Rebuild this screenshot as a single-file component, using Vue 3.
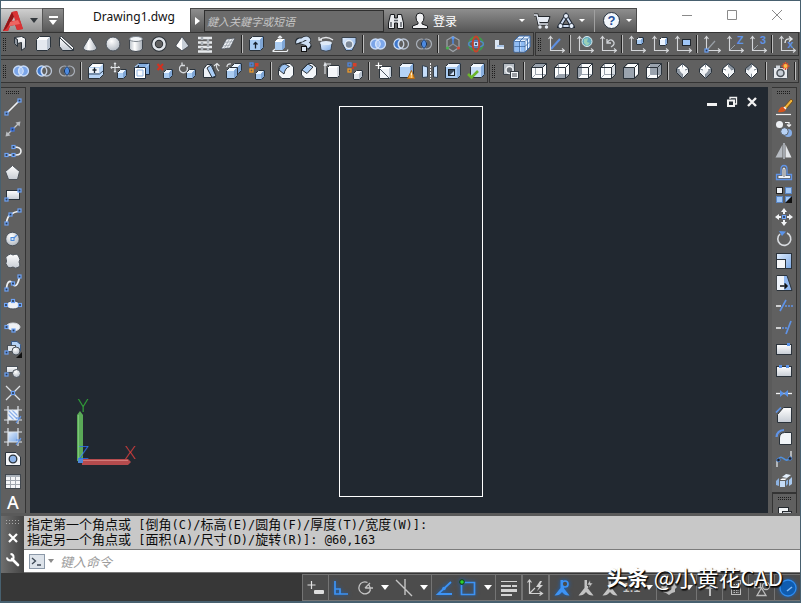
<script setup>
import { ref } from 'vue'

const DARK = '#2b333b'
const BLUE = '#5f93e6'
const PALE = '#aaccf2'

const poly = (points, fill, stroke = DARK) =>
  `<polygon transform="translate(-.5 -.5)" points="${points}" fill="${fill}" stroke="${stroke}" stroke-linejoin="round"/>`
const line = (d, stroke = '#e6e9ee', w = 1.4, extra = '') =>
  `<path d="${d}" fill="none" stroke="${stroke}" stroke-width="${w}" ${extra}/>`
const node = (x, y, stroke = '#6da2f5') =>
  `<rect x="${x - 1.5}" y="${y - 1.5}" width="3" height="3" fill="#2b3a52" stroke="${stroke}" stroke-width="1.2"/>`
const box = (x, y, s, front = '#e4e9ef', top = '#fdfdfe', side = '#b9c3cf', d = 3) =>
  poly(`${x},${y + d} ${x + s},${y + d} ${x + s},${y + s + d} ${x},${y + s + d}`, front, front) +
  poly(`${x},${y + d} ${x + d},${y} ${x + s + d},${y} ${x + s},${y + d}`, top, top) +
  poly(`${x + s},${y + d} ${x + s + d},${y} ${x + s + d},${y + s} ${x + s},${y + s + d}`, side, side) +
  poly(`${x},${y + d} ${x + d},${y} ${x + s + d},${y} ${x + s + d},${y + s} ${x + s},${y + s + d} ${x},${y + s + d}`, 'none')
const blueBox = (x, y, s, d = 3) => box(x, y, s, PALE, '#edf6ff', '#7fa6d6', d)
const circles = (a, b, lens) =>
  `<circle cx="6.5" cy="9" r="5" fill="${a}" stroke="#c9dcf8" stroke-width="1.3"/>` +
  `<circle cx="11.5" cy="9" r="5" fill="${b}" stroke="#c9dcf8" stroke-width="1.3"/>` +
  `<path d="M9 4.8a5 5 0 0 1 0 8.4a5 5 0 0 1 0-8.4" fill="${lens}" stroke="#dce8fb" stroke-width="1"/>`
const union = circles('#7ba5e8', '#7ba5e8', '#a9c6f4')
const subtract =
  '<circle cx="11.5" cy="9" r="5" fill="none" stroke="#b9c4d4" stroke-width="1.300"/><path d="M9 4.500A5 5 0 1 0 9 13.500A5 5 0 0 1 9 4.500Z" fill="#3f78cc" stroke="#cfe0f8" stroke-width="1.200"/>' +
  line('M9 4.500A5 5 0 0 1 9 13.500', '#c9d3e2', 1.2)
const intersect =
  '<circle cx="6.5" cy="9" r="5" fill="none" stroke="#a9afb8" stroke-width="1.2"/><circle cx="11.5" cy="9" r="5" fill="none" stroke="#a9afb8" stroke-width="1.2"/><path d="M9 4.6a5 5 0 0 1 0 8.8a5 5 0 0 1 0-8.8" fill="#4d8ae0" stroke="#1d3557"/>'
const axes = line('M3.500 2V15.500H17M1.500 4L3.500 1.500L5.500 4M15 13.500L17.500 15.500L15 17.500', '#d5d7da', 1.1)
const glyph = (t, x, y, size, fill) =>
  `<text x="${x}" y="${y}" font-family="Liberation Sans, sans-serif" font-weight="700" font-size="${size}" fill="${fill}">${t}</text>`
const diamond = (a, b, c, d) =>
  poly('9,2 15,7 9,10', a, '#7d8792') + poly('9,2 3,7 9,10', b, '#7d8792') +
  poly('3,7 9,10 9,17 3,11', c, '#7d8792') + poly('15,7 9,10 9,17 15,11', d, '#7d8792') +
  '<path d="M8.500 5L11.500 8.500L8.500 12L5.500 8.500Z" fill="#f4f6f8"/>' +
  poly('9,2 15,7 15,11 9,17 3,11 3,7', 'none')
const faceCube = (face) => {
  const w = '#fbfcfd'
  const g = '#9aa3ae'
  const frame = line('M1.500 16.500V5.500L5.500 1.500H16.500V12.500L12.500 16.500ZM1.500 5.500H12.500V16.500M12.500 5.500L16.500 1.500', DARK, 1)
  const fills = {
    top: '<path d="M2 6L6 2H16L12 6Z" fill="#9aa3ae"/>',
    bottom: '<path d="M2 16L6 12H16L12 16Z" fill="#9aa3ae"/>',
    left: '<path d="M2 16V6L6 2V12Z" fill="#9aa3ae"/>',
    right: '<path d="M12 16V6L16 2V12Z" fill="#d4d9df"/>',
    front: '<path d="M2 6H12V16H2Z" fill="#9aa3ae"/>',
    back: '<path d="M6 2H16V12H6Z" fill="#9aa3ae"/>'
  }
  const inner = face === 'front' ? '' : line('M5.500 2V12.500H16M5.500 12.500L2 16', g, 1)
  return `<path d="M2 16V6L6 2H16V12L12 16Z" fill="${w}"/>` + fills[face] + inner + frame
}

const solidTools = [
  ['Polysolid', poly('3,3 6,5 6,12 3,9', '#8f969f') + poly('3,3 10,2 14,4 14,13 10,16 10,8 6,9 6,5', 'url(#silver)')],
  ['Box', box(2, 2, 11)],
  ['Wedge', poly('2,3 2,12 5,16 16,16', 'url(#silver)') + poly('2,3 4,2 16,13 16,16', '#fff')],
  ['Cone', '<path d="M9 1.500L16 13Q15 16 9 16T2 13Z" fill="url(#sheen)" stroke="#4a5159"/>'],
  ['Sphere', '<circle cx="9" cy="9" r="7" fill="url(#ball)" stroke="#4a5159"/>'],
  ['Cylinder', '<path d="M2.500 4V14Q4 16.500 9 16.500T15.500 14V4Z" fill="url(#sheen)" stroke="#40464d"/><ellipse cx="9" cy="4" rx="6.500" ry="2.500" fill="#f3f6f9" stroke="#7b838c"/>'],
  ['Torus', '<circle cx="9" cy="9" r="5.500" fill="none" stroke="#2a3036" stroke-width="4.500"/><circle cx="9" cy="9" r="5.500" fill="none" stroke="#e1e5ea" stroke-width="2.600"/>'],
  ['Pyramid', '<path d="M9 2V15.500L3 11Z" fill="#fff"/><path d="M9 2L15.500 11L9 15.500Z" fill="#c8cfd7"/><path d="M9 1.500L16 11L9 16L2.500 11Z" fill="none" stroke="#4a5159" stroke-width="0.800"/>'],
  ['Helix', line('M2 3H16M2 7.500H16M2 12H16M2 16.500H16', '#e7eaed', 2.4) + line('M6 2V5M12 4V8M6 7V10M12 9V12M6 12V15M12 13V16', '#aab0b7', 2.4)],
  ['Planar surface', '<path d="M7.500 4L16 3L11 13L2 14Z" fill="#eceff3" stroke="#4a5159" stroke-width="0.800"/>' + line('M10.500 4L5 14M13.500 4L8 13M5.500 7.500L14 6.500M4 11L12 10', '#9aa2ab', 0.8)],
  null,
  ['Extrude', blueBox(2, 2, 11) + line('M7.500 13.500V7.500M5.500 9.500L7.500 7.500L9.500 9.500', '#16202c', 1.3)],
  ['Press pull', poly('5,7 12,7 12,15 5,15', PALE, PALE) + poly('5,7 7,5 14,5 12,7', '#fff', '#fff') + poly('12,7 14,5 14,13 12,15', '#7fa6d6', '#7fa6d6') + line('M9 6V1M7 3L9 1L11 3M4 14L1.500 16.500M2 16.500H16L17 14.500', '#eef1f4', 1.2)],
  ['Sweep', '<path d="M4 9Q2 4 8 5Q12 2 14 4T11 8L14 9Q17 11 13 13" fill="none" stroke="#1f262d" stroke-width="4.600"/><path d="M4 8Q3 5 8 5Q12 2 14 4T11 8L14 9Q16 10 13 12" fill="none" stroke="#cfe0f5" stroke-width="3.400"/><rect x="7.500" y="11.500" width="5" height="5" fill="#dce6f2" stroke="#111"/>'],
  ['Revolve', '<path d="M3 8H15L14 15Q9 17.500 4 15Z" fill="url(#blueSheen)" stroke="#3a434d"/><ellipse cx="9" cy="8" rx="6" ry="2" fill="#dfeaf7"/>' + line('M2 5Q9 0 16 5M2 2V5H5', '#e4e6e9', 1.3)],
  ['Loft', '<path d="M2 2.500H16V8L12 15.500H6L2 8Z" fill="url(#blueSheen)" stroke="#3a434d"/><ellipse cx="9" cy="9.500" rx="4" ry="4" fill="#7d8896" stroke="#e6edf5" stroke-width="1.500"/>'],
  null,
  ['Union', union],
  ['Subtract', subtract],
  ['Intersect', intersect],
  null,
  ['Constrained orbit', line('M9 1.500L15 5V12.500L9 16.500L3 12.500V5Z', '#a0a5ab', 1.2) + line('M9 3V9', '#4b86e0', 1.6) + line('M9 9L3 13', '#8d9299', 1.2) + line('M9 9L15 13', '#8d9299', 1.2) + '<circle cx="9" cy="3" r="1.600" fill="#5b97f0"/><circle cx="3.500" cy="13" r="1.600" fill="#49b34f"/><circle cx="14.500" cy="13" r="1.600" fill="#d84a3a"/>'],
  ['Gizmo', '<circle cx="9" cy="9" r="7" fill="none" stroke="#3f9b4b" stroke-width="1.800"/><ellipse cx="9" cy="9" rx="7.500" ry="3.300" fill="none" stroke="#5484c8" stroke-width="1.500"/><ellipse cx="9" cy="9" rx="3.300" ry="7.500" fill="none" stroke="#c9402d" stroke-width="1.800"/>' + node(9, 9, '#bcd6fa')],
  ['Align', '<path d="M5 5H9V10H14V14H5Z" fill="#dbe5f1"/><path d="M7 10H14V12H7Z" fill="#a9c4e6"/>'],
  ['Array', '<path d="M6 1H17V12L12 17H1V6Z" fill="#e9f3ff" stroke="#3b6db0"/><path d="M2 7H6V11H2ZM7.500 7H11.500V11H7.500ZM2 12H6V16H2ZM7.500 12H11.500V16H7.500Z" fill="#8fbcf5"/>' + line('M1.500 6.500H12V17M12 6.500L17 1.500M6.500 6.500V17M1.500 11.500H12L17 6.500M6.500 6.500L11.500 1.500M3.500 4H14.500V15', '#2f5f9f', 0.8)]
]

const ucsTools = [
  ['UCS', line('M4 14L13 4', '#5e8fe0', 2) + axes],
  null,
  ['World UCS', axes + '<circle cx="11" cy="6.500" r="5" fill="#63a9bd" stroke="#dceff5"/><path d="M8 4L12 3L11 7L14 8L11 11L8 8Z" fill="#9bd0b6"/>'],
  ['Previous UCS', axes + line('M8 4V8H12M8 8Q11 3 14 6T12 12', '#cfd2d6', 1.3)],
  null,
  ['Face UCS', axes + blueBox(9, 3, 5, 2)],
  ['Object UCS', axes + box(9, 3, 6, '#eaf3fe', '#fff', '#8fb4e4', 2)],
  ['View UCS', axes + '<rect x="8.500" y="4.500" width="8" height="6" fill="#9fc6f6" stroke="#20262d"/>'],
  null,
  ['Origin UCS', axes + line('M4 15L12 6', '#9aa0a7', 1.2) + node(3.5, 15.5)],
  ['Z axis vector', axes + line('M4 15L9 10', '#9aa0a7', 1) + glyph('Z', 11, 9, 11, BLUE)],
  ['Three point', axes + line('M4 15L9 10', '#9aa0a7', 1) + glyph('3', 11, 9, 11, BLUE)],
  null,
  ['Rotate X', axes + line('M7 8Q7 3 13 4M11 1.500L14 4L11 6.500', '#e1e4e7', 1.4) + glyph('x', 9.5, 13, 11, BLUE)]
]

const spark = '<rect x="2" y="1" width="3" height="3" fill="none" stroke="#4f86dd" stroke-width="1.300"/><rect x="7" y="1" width="3.500" height="3.500" fill="#d6402a"/><rect x="2" y="7" width="3" height="3" fill="none" stroke="#f09a28" stroke-width="1.300"/><rect x="6" y="5" width="2" height="2" fill="#c43a2a"/>'
const editTools = [
  ['Union solids', union],
  ['Subtract solids', subtract],
  ['Intersect solids', intersect],
  null,
  ['Extrude faces', '<path d="M1.500 5.500L5.500 1.500H16.500V12.500L12.500 16.500H1.500Z" fill="#b7d3f4" stroke="#2b333b"/><path d="M2 6H12V11H2Z" fill="#eef4fb"/><path d="M3 5L6 2H16L13 5Z" fill="#fff"/><path d="M2 12H12.500L16 9" fill="none" stroke="#33475f"/>' + line('M7.500 11V5.500M5.500 8H9.500', '#1b2530', 1.3)],
  ['Move faces', blueBox(8, 8, 6) + line('M5 1V10M1 5.500H10M4 2L5 1L6 2M4 9L5 10L6 9M2 4.500L1 5.500L2 6.500M8 4.500L9.500 5.500', '#e1e4e7', 1.1)],
  ['Offset faces', '<path d="M5.500 1.500H16.500V12.500H5.500Z" fill="#82acdf" stroke="#1d2c40"/><path d="M1.500 5.500H12.500V16.500H1.500Z" fill="#fff" stroke="#1d2c40"/><path d="M4 8H10V14H4Z" fill="#f8fbff" stroke="#8fb4e4"/>' + line('M2 5L6 2M12.500 5.500L16 2', '#a9caf2', 1.2)],
  ['Delete faces', blueBox(8, 8, 6) + line('M1.500 2L7 8M7 2L1.500 8', '#d4301f', 2)],
  ['Rotate faces', blueBox(8, 8, 6) + line('M3 3A4 4 0 1 0 8 5M3 0.500V3.500H6', '#d7dade', 1.3)],
  ['Taper faces', '<path d="M1.500 15.500V7L5 2.500H10L13 12V15.500Z" fill="#eef2f7" stroke="#2b333b"/><path d="M5 6L9 3L14 14L10 15.500Z" fill="#a9ccf5" stroke="#2b333b"/>' + line('M12 4L15 1.500L17.500 4M15 2Q13.500 6 17 9', '#e1e4e7', 1.1)],
  ['Copy faces', blueBox(7, 2, 7) + blueBox(2, 6, 8) + line('M2 5Q2 1.500 6 2', '#e1e4e7', 1.2)],
  ['Color faces', spark + blueBox(8, 9, 6)],
  null,
  ['Fillet edges', '<path d="M1.500 8Q2 1.500 9 1.500H13L16.500 5V13L13 16.500H5L1.500 13Z" fill="#f3f6f9" stroke="#2b333b"/><path d="M2 8Q3.500 2.500 8 2L12.500 4.500Q8 6 7 12Z" fill="#9cc3f2" stroke="#2b333b"/>'],
  ['Chamfer edges', '<path d="M1.500 8L8 1.500H12L16.500 5.500V13L13 16.500H5L1.500 13Z" fill="#f3f6f9" stroke="#2b333b"/><path d="M2 8L8 2L13 5L7 11.500Z" fill="#a9ccf5" stroke="#2b333b"/>'],
  ['Copy edges', box(5, 4, 10, '#f4f6f9', '#fff', '#d6dbe2', 2) + line('M2 12V2H8M1 4L2 1L3.500 4', '#dfe3e8', 1.1)],
  ['Color edges', spark + box(8, 9, 6)],
  null,
  ['Imprint', box(5, 5, 10, '#f1f5fa', '#fff', '#c8d1dc', 2) + line('M5 7L14 16', '#4b5663', 1) + line('M3.500 0.500V7M0.500 3.500H7', '#fff', 1.2)],
  ['Clean', box(2, 2, 11, '#b4d3f7', '#eef6ff', '#88afdf') + poly('14,9 17,17 10,17', '#f2a02c', '#b46a14') + line('M13.500 10.500V13.500M13.500 14.500V15.500', '#fff3d8', 1.3)],
  ['Separate', '<path d="M1.500 3.500L6.500 5V15L1.500 15.500ZM12.500 5L16.500 3.500V15.500L12.500 15Z" fill="#c6defa" stroke="#33404e"/>' + line('M9.500 1V17', '#f1f3f5', 1, 'stroke-dasharray="2 1"')],
  ['Shell', box(2, 2, 12, PALE, '#eef6ff', '#88afdf') + '<rect x="4.500" y="7.500" width="6" height="6" fill="#3a4a5c" stroke="#1a2128"/><path d="M6 13L10 9V13Z" fill="#cfe3fb"/>'],
  ['Check', box(4, 2, 11, '#c5dcf8', '#f3f9ff', '#88afdf') + line('M1 12L4.500 15.500L11 9', '#6bb52d', 2.6)]
]

const viewTools = [
  ['Named views', '<path d="M2.500 1.500H13.500V12.500H2.500Z" fill="#b9bfc6" stroke="#3a4148"/><circle cx="8.500" cy="8" r="3.500" fill="#6b7178" stroke="#eceff2" stroke-width="1.500"/><rect x="9.500" y="9.500" width="8" height="7" fill="#f4f6f8" stroke="#33393f"/>' + line('M11 12H16M11 14H16', '#3e454c', 1)],
  null,
  ['Top', faceCube('top')],
  ['Bottom', faceCube('bottom')],
  ['Left', faceCube('left')],
  ['Right', faceCube('right')],
  ['Front', faceCube('front')],
  ['Back', faceCube('back')],
  null,
  ['SW isometric', diamond('#fff', '#fff', '#8d96a1', '#eef1f4')],
  ['SE isometric', diamond('#fff', '#fff', '#eef1f4', '#8d96a1')],
  ['NE isometric', diamond('#8d96a1', '#fff', '#fff', '#eef1f4')],
  ['NW isometric', diamond('#fff', '#8d96a1', '#eef1f4', '#fff')],
  null,
  ['Create camera', '<rect x="1.500" y="5.500" width="14" height="11" rx="1" fill="#e7eaee" stroke="#4b5259"/><rect x="4" y="3.500" width="4" height="3" fill="#d0d5db"/><circle cx="8.500" cy="11" r="3.500" fill="#c7ced6" stroke="#4b5259" stroke-width="1.500"/><path d="M13.500 0V8M9.500 4H17.500M11 1.500L16 6.500M16 1.500L11 6.500" stroke="#e0502a" stroke-width="1.500"/><circle cx="13.500" cy="4" r="2" fill="#f7c04a"/>'],
  null
]

const hatch = line('M4 0V18M14 0V18M0 4H18M0 14H18', '#dfe5ec', 1.2)
const drawTools = [
  ['Line', line('M3 15L15 3', '#f2f3f5', 1.6) + node(2.5, 15.5) + node(15.5, 2.5)],
  ['Construction line', line('M3 15L15 3', '#c5c8cc', 1.2) + '<path d="M16.500 1.500L11.500 2.500L15.500 6.500ZM1.500 16.500L2.500 11.500L6.500 15.500Z" fill="#b9bcc0"/>' + node(8.5, 9.5, '#3f78ea')],
  ['Polyline', line('M3 13H12Q17 13 17 9T10 5', '#f0f2f4', 1.6) + node(2.5, 13) + node(9.5, 13) + node(9.5, 5)],
  ['Polygon', poly('9,2 16,8 14,16 5,16 2,8', 'url(#silver)', '#4a5159')],
  ['Rectangle', '<rect x="2.500" y="4.500" width="13" height="9" fill="url(#silver)" stroke="#2b333b"/>' + node(15.5, 4.5) + node(2.5, 13.5)],
  ['Arc', line('M2.500 15Q3 9 6.500 6.500T15.500 3', '#f0f2f4', 1.7) + node(2.5, 15.5) + node(6.5, 6.5) + node(15.5, 2.5)],
  ['Circle', '<circle cx="8.500" cy="9" r="6.800" fill="url(#ball)" stroke="#4a5159"/>' + line('M9 9L13 5', '#5b93df', 1.3) + '<rect x="7" y="7.500" width="3" height="3" fill="#cfe3fa" stroke="#4d8ad9"/>'],
  ['Revision cloud', '<path d="M4 3Q7 1 9 3Q13 1 14.500 4Q17 8 15 10Q17 14 14 15.500Q11 17 9 15Q4 17 3 13.500Q1 12 2.500 9Q0.500 5 4 3Z" fill="url(#silver)" stroke="#4a5159"/>'],
  ['Spline', line('M2.500 15C3 6 7 6 9 10S14 11 15.500 3', '#eef1f4', 1.7) + node(2.5, 15.5) + node(9, 9.5) + node(15.5, 2.5)],
  ['Ellipse', '<ellipse cx="9" cy="9" rx="7" ry="4" fill="#eef1f5" stroke="#4a5159"/>' + node(2, 9) + node(16, 9) + node(9, 5)],
  ['Ellipse arc', '<path d="M2 9A7 4 0 1 1 9 13" fill="#eef1f5" stroke="#d6dae0"/><ellipse cx="9" cy="9" rx="6" ry="3.300" fill="#eef1f5"/>' + node(2.5, 9) + node(9.5, 12.5)],
  ['Insert block', '<path d="M7.500 1.500H13L16.500 4.500V11H7.500Z" fill="#b7d3f4" stroke="#3a5c8a"/><rect x="3.500" y="5.500" width="8" height="6" fill="#dfe4ea" stroke="#4a5159"/><circle cx="12" cy="11" r="4" fill="url(#ball)" stroke="#4a5159"/>' + node(2.5, 12.5) + '<path d="M18 12V18H12Z" fill="#111"/>'],
  ['Make block', '<rect x="2.500" y="4.500" width="11" height="6" fill="url(#silver)" stroke="#4a5159"/><circle cx="12.500" cy="11.500" r="4" fill="url(#ball)" stroke="#4a5159"/>' + node(2.5, 12.5)],
  ['Point', line('M2 2L16 16M16 2L2 16', '#dfe2e6', 1.3) + node(9, 9)],
  ['Hatch', '<rect x="4" y="4" width="10" height="10" fill="#eef4fc"/>' + line('M4 8L10 14M4 4L14 14M8 4L14 10', '#8db1ea', 1.3) + hatch + line('M12 17L17 10M12 12H17', BLUE, 1.2)],
  ['Gradient', '<rect x="4" y="4" width="10" height="10" fill="url(#blueSheen)"/>' + hatch + line('M12 17L17 10M12 12H17', BLUE, 1.2)],
  ['Region', '<path d="M1.500 2.500H12L16.500 7V15.500H1.500Z" fill="#f3f5f8" stroke="#2b333b"/><circle cx="9" cy="9" r="3.800" fill="#8db4e8" stroke="#2b333b" stroke-width="1.300"/>'],
  ['Table', '<rect x="1.500" y="2.500" width="15" height="14" fill="#f5f6f8" stroke="#42484f"/><rect x="2" y="3" width="14" height="2" fill="#a9b0b8"/>' + line('M2 8.500H16M2 12.500H16M6.500 5V16M11.500 5V16', '#a0a6ae', 1)],
  ['Multiline text', '<text x="9" y="15" text-anchor="middle" font-family="Noto Sans, sans-serif" font-weight="500" font-size="18" fill="#fff">A</text>']
]

const modifyTools = [
  ['Erase', '<path d="M9 9L16 1L18 3L11 11Z" fill="#f0b43a" stroke="#6b4310" stroke-width="0.800"/><path d="M3 14Q5 8 9 9L11 11Q10 15 3 14Z" fill="#d6551d"/>' + line('M9 9L11 11', '#f4f4f4', 1.6) + line('M1 16.500H16', '#f0f1f2', 1.2)],
  ['Copy', '<circle cx="4.500" cy="4.500" r="3.500" fill="#eef1f5"/><circle cx="13" cy="13" r="4" fill="#86aee8"/><circle cx="9.500" cy="11.500" r="3.800" fill="#b8d2f5" stroke="#59616b"/>' + line('M10 2.500H14V6M12 4.500L14 6.500L16 4.500', '#f1f2f4', 1.2)],
  ['Mirror', poly('8,3 8,16 1,16', '#b6bbc2', 'none') + poly('11,3 11,16 17,16', '#e3e6ea', 'none') + line('M9 1V17', '#e5eefb', 1)],
  ['Offset', line('M1.500 15.500V10.500H6V5Q6 1.500 9 1.500T12 5V10.500H16.500V15.500Z', BLUE, 1.3) + line('M4 13.500V12.500H8V6Q8 4 9 4T10 6V12.500H14.500V13.500Z', '#f1f5fb', 1.1)],
  ['Array objects', '<rect x="1.500" y="1.500" width="6" height="6" fill="#f1f4f8" stroke="#222"/><rect x="10.500" y="1.500" width="6" height="6" fill="#9fc6f6" stroke="#5b86c4"/><rect x="1.500" y="10.500" width="6" height="6" fill="#9fc6f6" stroke="#5b86c4"/><rect x="10.500" y="10.500" width="6" height="6" fill="#9fc6f6" stroke="#5b86c4"/><path d="M17 10V17H10Z" fill="#111"/>'],
  ['Move', '<path d="M9 0L12 4H10V6H8V4H6ZM9 18L12 14H10V12H8V14H6ZM0 9L4 6V8H6V10H4V12ZM18 9L14 6V8H12V10H14V12Z" fill="#f2f4f6"/>' + node(9, 9)],
  ['Rotate', line('M5 4A6.500 6.500 0 1 0 12 3', '#d9dce0', 1.6) + '<path d="M4 1L11 1.500L7 6Z" fill="#5b94ea"/>'],
  ['Scale', '<rect x="1.500" y="1.500" width="15" height="15" fill="url(#blueSheen)" stroke="#2b333b"/><rect x="1.500" y="7.500" width="9" height="9" fill="#f5f6f8" stroke="#2b333b"/>'],
  ['Stretch', '<path d="M2 1.500H12L17 16.500H2Z" fill="#8fb6ee" stroke="#2b333b"/><path d="M2 2H9V16H2Z" fill="#eef3fa"/>' + line('M5 12H12M9.500 9.500L12 12L9.500 14.500', '#111', 1.5)],
  ['Trim', line('M1 10H6', '#f3f4f6', 1.5) + line('M5 15L11 4', BLUE, 1.6) + line('M10 10H18', BLUE, 1.4, 'stroke-dasharray="2 1"')],
  ['Extend', line('M1 10H6', '#f3f4f6', 1.5) + line('M7 10H12', BLUE, 1.4, 'stroke-dasharray="2 1"') + line('M11 16L16 3', BLUE, 1.7)],
  ['Break at point', '<rect x="1.500" y="4.500" width="15" height="10" fill="url(#silver)" stroke="#2b333b"/><rect x="12" y="3" width="3" height="3" fill="#5b94ea"/>'],
  ['Break', '<rect x="1.500" y="4.500" width="15" height="10" fill="url(#silver)" stroke="#2b333b"/><rect x="4" y="3" width="3" height="3" fill="#5b94ea"/><rect x="11" y="3" width="3" height="3" fill="#5b94ea"/>'],
  ['Join', line('M1 9.500H17', '#f3f4f6', 1.3) + '<path d="M5 6L9 9.500L5 13ZM13 6L9 9.500L13 13Z" fill="#5b94ea"/>'],
  ['Chamfer', '<path d="M8.500 1.500H16.500V16.500H2.500V8.500Z" fill="url(#silver)" stroke="#2b333b"/>' + line('M1 6.500L6 1.500', BLUE, 1.7)],
  ['Fillet', '<path d="M9.500 4.500H16.500V16.500H4.500V10Q4.500 5 9.500 4.500Z" fill="#f1f4f7" stroke="#2b333b"/>' + line('M1.500 9Q2 2.500 9 2', BLUE, 2.2)],
  ['Blend curves', line('M2 17V11M16 8V1', '#c9ccd0', 1.6) + line('M3 10C7 2 10 15 15 8', '#4e90df', 1.6) + '<circle cx="3.500" cy="10" r="1.800" fill="#222" stroke="#4c7fca"/><circle cx="15" cy="8.500" r="1.800" fill="#222" stroke="#4c7fca"/>'],
  ['Explode', '<path d="M7 5L11 2L16 3L12 6Z" fill="#e3effc"/><path d="M5 9H10V15H5Z" fill="#c5dcf6"/><path d="M5 8L7 6.500H12L10 8Z" fill="#fff"/><path d="M11 9L13 7.500V12L11 14Z" fill="#86aede"/><path d="M14 8L17 5V12L14 14Z" fill="#a9c9ef"/><path d="M1 9L4 6V14L1 13Z" fill="#8db2e0"/>']
]
const orderTools = [
  ['Draw order', '<rect x="2.500" y="3.500" width="10" height="6" fill="#f3f5f7" stroke="#25292e"/><rect x="6.500" y="7.500" width="9" height="5" fill="#c6cacf" stroke="#25292e"/>']
]

const G = '#c4c4c4'
const B = '#3d93f5'
const person = (c) => `<path d="M10 1H7.500V9L1.500 16.500Q6 17 9 13Q12 17 16.500 16.500L11 9.500V7H10Z" fill="${c}"/>`
const I = (name, svg, on) => ({ name, svg, on })
const A = (name) => ({ name, arrow: true })
const statusCells = [
  { items: [I('Grid tools', line('M4.500 2V10M0.500 6H8.500', '#e2e2e2', 1.2) + '<rect x="7" y="11" width="10" height="4" rx="1" fill="#dedede"/>')] },
  { wide: true, items: [
    I('Ortho mode', line('M3 2V15H16M3 10H8V15', B, 1.7), true),
    I('Polar tracking', line('M14.500 11A6 6 0 1 1 11.500 3.500M9 9H17M9 9L14 4M13 6Q15 9 14 12', G, 1.3)), A('Polar options'),
    I('Isometric drafting', line('M1 1L17 17M10 0V16', G, 1.4)), A('Isometric options')] },
  { wide: true, items: [
    I('Object snap tracking', line('M16 3L3 15H17', B, 1.8) + '<circle cx="9" cy="9.500" r="1.800" fill="#3d93f5"/>', true),
    I('Object snap', line('M4 3.500H15.500V15.500H2.500V6', B, 1.7) + '<circle cx="3" cy="3" r="2.300" fill="#2fd12f" stroke="#0b3d0b"/>', true), A('Snap options')] },
  { items: [I('Lineweight', '<path d="M1 2H17V3H1ZM1 6H11V8H1ZM12 6H17V8H12ZM1 10H17V13H1ZM1 15H12V17H1Z" fill="#d2d2d2"/>')] },
  { split: true, items: [I('Dynamic UCS', line('M2.500 1V14.500H15M0.500 3.500L2.500 1L4.500 3.500M12.500 12.500L15.500 14.500L12.500 16.500M3 14L8 9', '#d2d2d2', 1.2) + '<path d="M13 2L9 8H12L10 12L16 6H13L15 2Z" fill="#d2d2d2"/>')] },
  { split: true, wide: true, items: [
    I('Annotation visibility', person(B) + '<circle cx="12" cy="5" r="3" fill="#4c4c4c" stroke="#3d93f5" stroke-width="1.700"/>', true),
    I('Annotation autoscale', person(G) + '<path d="M13 1L10 6H12.500L11 10L16 4H13.500Z" fill="#c4c4c4" stroke="#4c4c4c" stroke-width="0.600"/>'),
    I('Annotation scale person', person(G)),
    { name: 'Annotation scale', text: '1:1' }, A('Scale options')] },
  { wide: true, items: [I('Workspace', '<path d="M9 2L11 4L14 3L15 6L17 8L15 10V13L12 14L9 16L6 14L3 13V10L1 8L3 6L4 3L7 4Z" fill="#bdbdbd"/><circle cx="9" cy="9" r="2.500" fill="#4b4b4b"/>'), A('Workspace options')] },
  { items: [I('Annotation monitor', line('M9 1V17M1 9H17', '#bdbdbd', 2))] },
  { items: [I('Units', '<rect x="4.500" y="1.500" width="9" height="14" fill="none" stroke="#bdbdbd"/>' + line('M6.500 5.500H12M6.500 8.500H12M6.500 11.500H12M6.500 13.500H12', '#bdbdbd', 1.2, 'stroke-dasharray="1.5 1"'))] },
  { items: [I('Isolate objects', line('M1.500 2.500H7.500V8.500H1.500ZM8.500 9L13 16.500H4Z', '#bdbdbd', 1.3) + '<circle cx="13" cy="7" r="3.500" fill="none" stroke="#bdbdbd" stroke-width="1.300"/>')] },
  { items: [I('Hardware acceleration', '<circle cx="9" cy="9" r="8" fill="#0f5cb0" stroke="#2f8df0" stroke-width="1.300"/>' + line('M8 12L13 8', '#7fb9f5', 1.6), true)] }
]

const history = ['指定第一个角点或 [倒角(C)/标高(E)/圆角(F)/厚度(T)/宽度(W)]:', '指定另一个角点或 [面积(A)/尺寸(D)/旋转(R)]: @60,163']
const runs = (s) => s.match(/[\u4e00-\u9fff]+|[^\u4e00-\u9fff]+/g)
const isHan = (s) => /[\u4e00-\u9fff]/.test(s)

const search = ref('')
const command = ref('')
</script>

<template>
  <div class="app">
    <svg class="defs" aria-hidden="true">
      <defs>
        <linearGradient id="silver" x1="0" y1="0" x2="0" y2="1"><stop offset="0" stop-color="#fff" /><stop offset="1" stop-color="#c6ccd4" /></linearGradient>
        <linearGradient id="sheen"><stop offset="0" stop-color="#b9c0c8" /><stop offset=".4" stop-color="#fff" /><stop offset="1" stop-color="#a6adb6" /></linearGradient>
        <linearGradient id="blueSheen" x1="0" y1="0" x2="1" y2="1"><stop offset="0" stop-color="#e3effd" /><stop offset="1" stop-color="#7aa7e4" /></linearGradient>
        <radialGradient id="ball" cx=".4" cy=".3" r=".8"><stop offset="0" stop-color="#fff" /><stop offset="1" stop-color="#a9b1bb" /></radialGradient>
      </defs>
    </svg>

    <header class="titlebar">
      <button class="app-menu" aria-label="Application menu">
        <svg width="22" height="22" viewBox="0 0 22 22">
          <path d="M0 21L9 2L14 1L20 19L14 20L12 15L7 16L5 21Z" fill="#c9292b" />
          <path d="M9 2L14 1L20 19L14 20L11 7L5 21H0Z" fill="#d93335" />
          <path d="M11 7L9 2L0 21L3 19Z" fill="#8f1719" />
          <path d="M7 12L15 10L17 14L6 16Z" fill="#ee6662" />
          <path d="M9 11L11 7L12 10.500Z" fill="#c4c6c8" />
        </svg>
        <i class="tri ink"></i>
      </button>
      <button class="quick" aria-label="Customize quick access"><span class="bar"></span><i class="tri"></i></button>
      <h1>Drawing1.dwg</h1>
      <div class="info">
        <button class="collapse" aria-label="Collapse search"><i class="tri-right"></i></button>
        <input v-model="search" class="search" type="text" aria-label="搜索" placeholder="鍵入关鍵字或短语" />
        <button class="tool" aria-label="Search">
          <svg width="18" height="18" viewBox="0 0 18 18"><path d="M3.500 2.500H7.500V6H10.500V2.500H14.500L16.500 11V16.500H10.500V11H7.500V16.500H1.500V11Z" fill="#e9ebee" stroke="#17191c" /><path d="M4 10V15M14 10V15M7 8.500H11" stroke="#5c6168" stroke-width="1.500" /></svg>
        </button>
        <button class="signin">
          <svg width="18" height="18" viewBox="0 0 18 18"><path d="M9 1Q13 1 13 5Q13 9 11 10.500V12L16.500 14V16.500H1.500V14L7 12V10.500Q5 9 5 5Q5 1 9 1Z" fill="#f1f2f4" stroke="#1b1d20" /></svg>
          <span>登录</span><i class="tri small"></i>
        </button>
        <button class="tool cart" aria-label="Store">
          <svg width="18" height="18" viewBox="0 0 18 18"><path d="M1 3H4L6 12H15" fill="none" stroke="#1d2024" stroke-width="3" /><path d="M4 4.500H17L15 10.500H6Z" fill="#e7ecf4" stroke="#23272c" /><path d="M1 3H4L6 12H15" fill="none" stroke="#e7ecf4" stroke-width="1.500" /><circle cx="7" cy="15" r="1.700" fill="#e7ecf4" /><circle cx="13.500" cy="15" r="1.700" fill="#e7ecf4" /></svg>
        </button>
        <button class="share" aria-label="Connect">
          <svg width="18" height="18" viewBox="0 0 18 18"><path d="M9 4L15 14H3Z" fill="none" stroke="#1d2430" stroke-width="4" /><path d="M9 4L15 14H3Z" fill="none" stroke="#cddbf0" stroke-width="2" /><circle cx="9" cy="4" r="2.500" fill="#e6eefa" stroke="#27303c" /><circle cx="3.500" cy="14" r="2.500" fill="#e6eefa" stroke="#27303c" /><circle cx="14.500" cy="14" r="2.500" fill="#e6eefa" stroke="#27303c" /></svg>
          <i class="tri small"></i>
        </button>
        <button class="help" aria-label="Help"><span class="mark">?</span><i class="tri small"></i></button>
      </div>
      <div class="window">
        <button aria-label="Minimize"><svg width="12" height="12" viewBox="0 0 12 12"><path d="M1 6.500H11" stroke="#8a8a8a" /></svg></button>
        <button aria-label="Maximize"><svg width="12" height="12" viewBox="0 0 12 12"><path d="M1.500 1.500H10.500V10.500H1.500Z" fill="none" stroke="#8a8a8a" /></svg></button>
        <button aria-label="Close"><svg width="12" height="12" viewBox="0 0 12 12"><path d="M1 1L11 11M11 1L1 11" stroke="#8a8a8a" /></svg></button>
      </div>
    </header>

    <div v-for="(row, r) in [[solidTools, ucsTools], [editTools, viewTools]]" :key="r" class="toolrow">
      <div v-for="(group, g) in row" :key="g" class="toolbar" role="toolbar">
        <span class="grip"></span>
        <template v-for="(t, i) in group" :key="i">
          <button v-if="t" class="tool" :aria-label="t[0]"><svg width="18" height="18" viewBox="0 0 18 18" v-html="t[1]"></svg></button>
          <span v-else class="sep"></span>
        </template>
      </div>
    </div>

    <main class="workspace">
      <div class="side">
        <div class="toolbar vertical" role="toolbar">
          <span class="grip"></span>
          <button v-for="t in drawTools" :key="t[0]" class="tool" :aria-label="t[0]"><svg width="18" height="18" viewBox="0 0 18 18" v-html="t[1]"></svg></button>
        </div>
      </div>
      <section class="canvas">
        <svg class="drawing" width="738" height="426" viewBox="0 0 738 426">
          <rect x="309.500" y="19.500" width="143" height="390" fill="none" stroke="#fff" />
          <path d="M47 374V328L50 324L53 328V374Z" fill="#5aa957" />
          <path d="M48.500 374V328" stroke="#7cc578" />
          <path d="M52 372H98L101 375L98 378H52Z" fill="#b54b4d" />
          <path d="M53 373.500H98" stroke="#d37a78" />
          <rect x="48" y="371" width="5" height="5" fill="#4a86d8" />
          <g class="axis">
            <text x="53" y="325" fill="#35b43a">Y</text>
            <text x="100" y="372" fill="#dc4040">X</text>
            <text x="54" y="372" fill="#2f6fe6">Z</text>
          </g>
        </svg>
        <div class="doc">
          <button aria-label="Minimize drawing"><svg width="12" height="12" viewBox="0 0 12 12"><path d="M1 7H11V10H1Z" fill="#f2f2f2" /></svg></button>
          <button aria-label="Restore drawing"><svg width="12" height="12" viewBox="0 0 12 12"><path d="M4 3V1.500H10.500V8H9" fill="none" stroke="#f2f2f2" stroke-width="1.300" /><path d="M2 4.500H8V10H2Z" fill="none" stroke="#f2f2f2" stroke-width="2" /></svg></button>
          <button aria-label="Close drawing"><svg width="12" height="12" viewBox="0 0 12 12"><path d="M2 2L10 10M10 2L2 10" stroke="#f2f2f2" stroke-width="2.400" /></svg></button>
        </div>
      </section>
      <div class="side right">
        <div v-for="(group, g) in [modifyTools, orderTools]" :key="g" class="toolbar vertical" role="toolbar">
          <span class="grip"></span>
          <button v-for="t in group" :key="t[0]" class="tool" :aria-label="t[0]"><svg width="18" height="18" viewBox="0 0 18 18" v-html="t[1]"></svg></button>
        </div>
      </div>
    </main>

    <section class="command">
      <div class="handle">
        <span class="grip"></span>
        <button aria-label="Close command line"><svg width="12" height="12" viewBox="0 0 12 12"><path d="M2 2L10 10M10 2L2 10" stroke="#fff" stroke-width="2.200" /></svg></button>
        <button aria-label="Customize"><svg width="14" height="14" viewBox="0 0 14 14"><path d="M6 6L12 12" stroke="#fff" stroke-width="2.600" stroke-linecap="round" /><path d="M4.500 1A3.300 3.300 0 1 1 1 4.500" fill="none" stroke="#fff" stroke-width="2" /></svg></button>
      </div>
      <div class="lines">
        <div class="history">
          <p v-for="h in history" :key="h"><span v-for="(s, i) in runs(h)" :key="i" :class="{ han: isHan(s) }">{{ s }}</span></p>
        </div>
        <label class="prompt">
          <svg width="16" height="15" viewBox="0 0 16 15"><rect x=".5" y=".5" width="15" height="14" fill="#dde3ea" stroke="#8b98a8" /><path d="M3 4L6.500 7L3 10M8 11H12" fill="none" stroke="#3b4653" stroke-width="1.300" /></svg>
          <i class="tri grey"></i>
          <input v-model="command" type="text" aria-label="命令" placeholder="键入命令" />
        </label>
      </div>
    </section>

    <footer class="status">
      <div v-for="(cell, c) in statusCells" :key="c" class="cell" :class="{ split: cell.split, wide: cell.wide }">
        <button v-for="it in cell.items" :key="it.name" :aria-label="it.name" :class="{ arrow: it.arrow, scale: it.text, on: it.on }">
          <i v-if="it.arrow" class="tri"></i>
          <template v-else-if="it.text">{{ it.text }}</template>
          <svg v-else width="18" height="18" viewBox="0 0 18 18" v-html="it.svg"></svg>
        </button>
      </div>
      <div class="watermark"><b>头条</b><span>@小黄花CAD</span></div>
    </footer>
  </div>
</template>

<style>
body {
  margin: 0;
  background: #373737;
}
</style>

<style scoped>
* {
  box-sizing: border-box;
}
.app {
  display: flex;
  flex-direction: column;
  height: 100vh;
  overflow: hidden;
  border: 1px solid #47606f;
  border-bottom: 0;
  background: #5a5a5a;
  font-family: "Noto Sans", "Noto Sans CJK SC", sans-serif;
  font-size: 12px;
}
.defs {
  position: absolute;
  width: 0;
  height: 0;
}
button {
  display: flex;
  align-items: center;
  justify-content: center;
  flex: none;
  padding: 0;
  border: 0;
  background: none;
  color: inherit;
  font: inherit;
}
svg {
  display: block;
  flex: none;
}
.tri {
  flex: none;
  width: 0;
  height: 0;
  border: 4px solid transparent;
  border-top: 5px solid #fff;
  border-bottom: 0;
}
.tri.ink {
  border-top-color: #33383d;
}
.tri.small {
  border-width: 3px 3px 0;
}
.tri.grey {
  border-width: 4px 3px 0;
  border-top-color: #8b8b8b;
}
.tri-right {
  border: 4px solid transparent;
  border-left: 5px solid #fff;
  border-right: 0;
}

.titlebar {
  display: flex;
  flex: none;
  align-items: flex-end;
  height: 31px;
  background: #fff;
}
.app-menu {
  gap: 5px;
  width: 41px;
  height: 24px;
  padding-right: 2px;
  background: linear-gradient(#cfcfcf, #929292);
  border-top: 1px solid #777;
}
.quick {
  flex-direction: column;
  gap: 2px;
  width: 22px;
  height: 24px;
  border: 1px solid #555;
  background: linear-gradient(#8c8c8c, #5a5a5a);
}
.bar {
  width: 9px;
  height: 2px;
  background: #fff;
}
h1 {
  width: 126px;
  margin: 0;
  padding-left: 14px;
  color: #111;
  font: 400 12px/31px "Noto Sans", sans-serif;
  text-align: center;
}
.info {
  display: flex;
  align-items: center;
  flex: 0 1 447px;
  height: 24px;
  border: 1px solid #4a4a4a;
  border-bottom: 0;
  background: linear-gradient(#8e8e8e, #565656);
  color: #fff;
}
.collapse {
  width: 13px;
  height: 23px;
}
.search {
  width: 180px;
  height: 22px;
  padding: 0 2px;
  border: 1px solid #2f2f2f;
  border-radius: 0;
  background: #6b6b6b;
  color: #fff;
  font: italic 11px "Noto Sans CJK SC", sans-serif;
  outline: 0;
}
.search::placeholder {
  color: #c6c6c6;
  opacity: 1;
}
.signin {
  flex: 1 1 auto;
  gap: 4px;
  padding: 0 4px;
}
.signin .tri {
  margin-left: auto;
}
.cart {
  margin-left: 1px;
}
.share {
  gap: 4px;
  height: 22px;
  padding: 0 9px 0 4px;
  border-right: 1px solid #a0a0a0;
}
.help {
  gap: 6px;
  padding: 0 4px 0 8px;
}
.mark {
  width: 17px;
  height: 17px;
  border: 1px solid #27313d;
  border-radius: 50%;
  background: #f2f6fb;
  color: #1f4f9c;
  font: 700 13px/15px "Liberation Sans", sans-serif;
}
.window {
  display: flex;
  align-self: flex-start;
  margin-right: 1px;
  margin-left: auto;
}
.window button {
  width: 45px;
  height: 28px;
}

.toolrow {
  display: flex;
  gap: 1px;
  flex: none;
  margin-bottom: 3px;
}
.toolrow + .toolrow {
  margin-bottom: 4px;
}
.toolbar {
  display: flex;
  align-items: center;
  flex: none;
  height: 24px;
  border: 1px solid #343434;
  background: #606060;
}
.toolbar:first-child {
  border-left: 0;
}
.tool {
  width: 23px;
  height: 22px;
}
.grip {
  flex: none;
  width: 8px;
  height: 14px;
  padding: 0 2px;
  background:
    linear-gradient(#606060 1px, transparent 1px) 0 0 / 2px 2px,
    linear-gradient(90deg, #1c1c1c 1px, transparent 1px) 0 0 / 2px 2px;
  background-clip: content-box;
}
.sep {
  flex: none;
  width: 6px;
  height: 18px;
  background: linear-gradient(90deg, transparent 2px, #222 2px 3px, #bdbdbd 3px 4px, transparent 4px);
}

.workspace {
  display: flex;
  flex: 1 1 0;
  min-height: 0;
}
.side {
  width: 29px;
  flex: none;
  overflow: hidden;
}
.side.right {
  width: 32px;
  padding-left: 4px;
}
.toolbar.vertical {
  flex-direction: column;
  width: 25px;
  height: auto;
}
.vertical .grip {
  width: 14px;
  height: 8px;
  padding: 2px 0 1px;
}
.canvas {
  position: relative;
  flex: 1;
  overflow: hidden;
  background: #212830;
}
.drawing {
  position: absolute;
  top: 0;
  left: 0;
}
.axis text {
  font: 300 18px Lato, sans-serif;
  text-anchor: middle;
}
.doc {
  position: absolute;
  top: 5px;
  right: 6px;
  display: flex;
}
.doc button {
  width: 20px;
  height: 20px;
}

.command {
  display: flex;
  flex: none;
  margin-top: 3px;
}
.handle {
  display: flex;
  flex-direction: column;
  align-items: center;
  gap: 4px;
  width: 23px;
  padding-top: 3px;
  background: linear-gradient(90deg, #6e6e6e, #444);
}
.handle .grip {
  width: 16px;
  height: 6px;
  padding: 0;
  background: radial-gradient(circle, #aaa 1px, transparent 1px) 0 0 / 3px 3px;
}
.handle button {
  width: 20px;
  height: 18px;
}
.lines {
  flex: 1;
  min-width: 0;
}
.history {
  height: 34px;
  padding: 2px 3px;
  border-bottom: 1px solid #7c7c7c;
  background: #c8c8c8;
  color: #0c0c0c;
}
.history p {
  height: 15px;
  margin: 0;
  font: 12px/15px "DejaVu Sans Mono", monospace;
  white-space: pre;
}
.history .han {
  font: 13px/15px "Liberation Mono", "Noto Sans CJK SC", monospace;
}
.prompt {
  display: flex;
  align-items: center;
  height: 23px;
  padding-left: 5px;
  border-bottom: 1px solid #777;
  background: #fff;
}
.prompt .tri {
  margin: 0 6px 0 3px;
}
.prompt input {
  flex: 1;
  min-width: 0;
  padding: 0;
  border: 0;
  background: none;
  outline: 0;
  font: italic 13px "Noto Sans CJK SC", sans-serif;
}
.prompt input::placeholder {
  color: #9c9c9c;
  opacity: 1;
}

.status {
  position: relative;
  display: flex;
  justify-content: flex-end;
  flex: none;
  height: 30px;
  padding-top: 1px;
  border-bottom: 2px solid #47606f;
  background: #373737;
  color: #c8c8c8;
}
.cell {
  display: flex;
  align-items: center;
  border: 1px solid #747474;
  border-right: 0;
  background: #4c4c4c;
}
.cell.split {
  margin-left: 1px;
  box-shadow: -1px 0 #747474;
}
.cell button {
  width: 25px;
  height: 24px;
}
.cell.wide button {
  width: 24px;
}
.cell.wide button.arrow {
  width: 15px;
}
.cell.wide button.scale {
  width: 19px;
  font: 700 12px "Liberation Sans", sans-serif;
}
.on svg {
  filter: drop-shadow(0 0 2px #1263c4);
}
.watermark {
  position: absolute;
  right: 17px;
  bottom: 12px;
  display: flex;
  gap: 5px;
  color: #fff;
  font: 400 22px/26px "Noto Sans CJK SC", sans-serif;
  text-shadow: 1px 1px 1px #000, 1px 2px 1px #222;
  pointer-events: none;
}
.watermark b {
  font-size: 21px;
  font-weight: 700;
}
</style>
